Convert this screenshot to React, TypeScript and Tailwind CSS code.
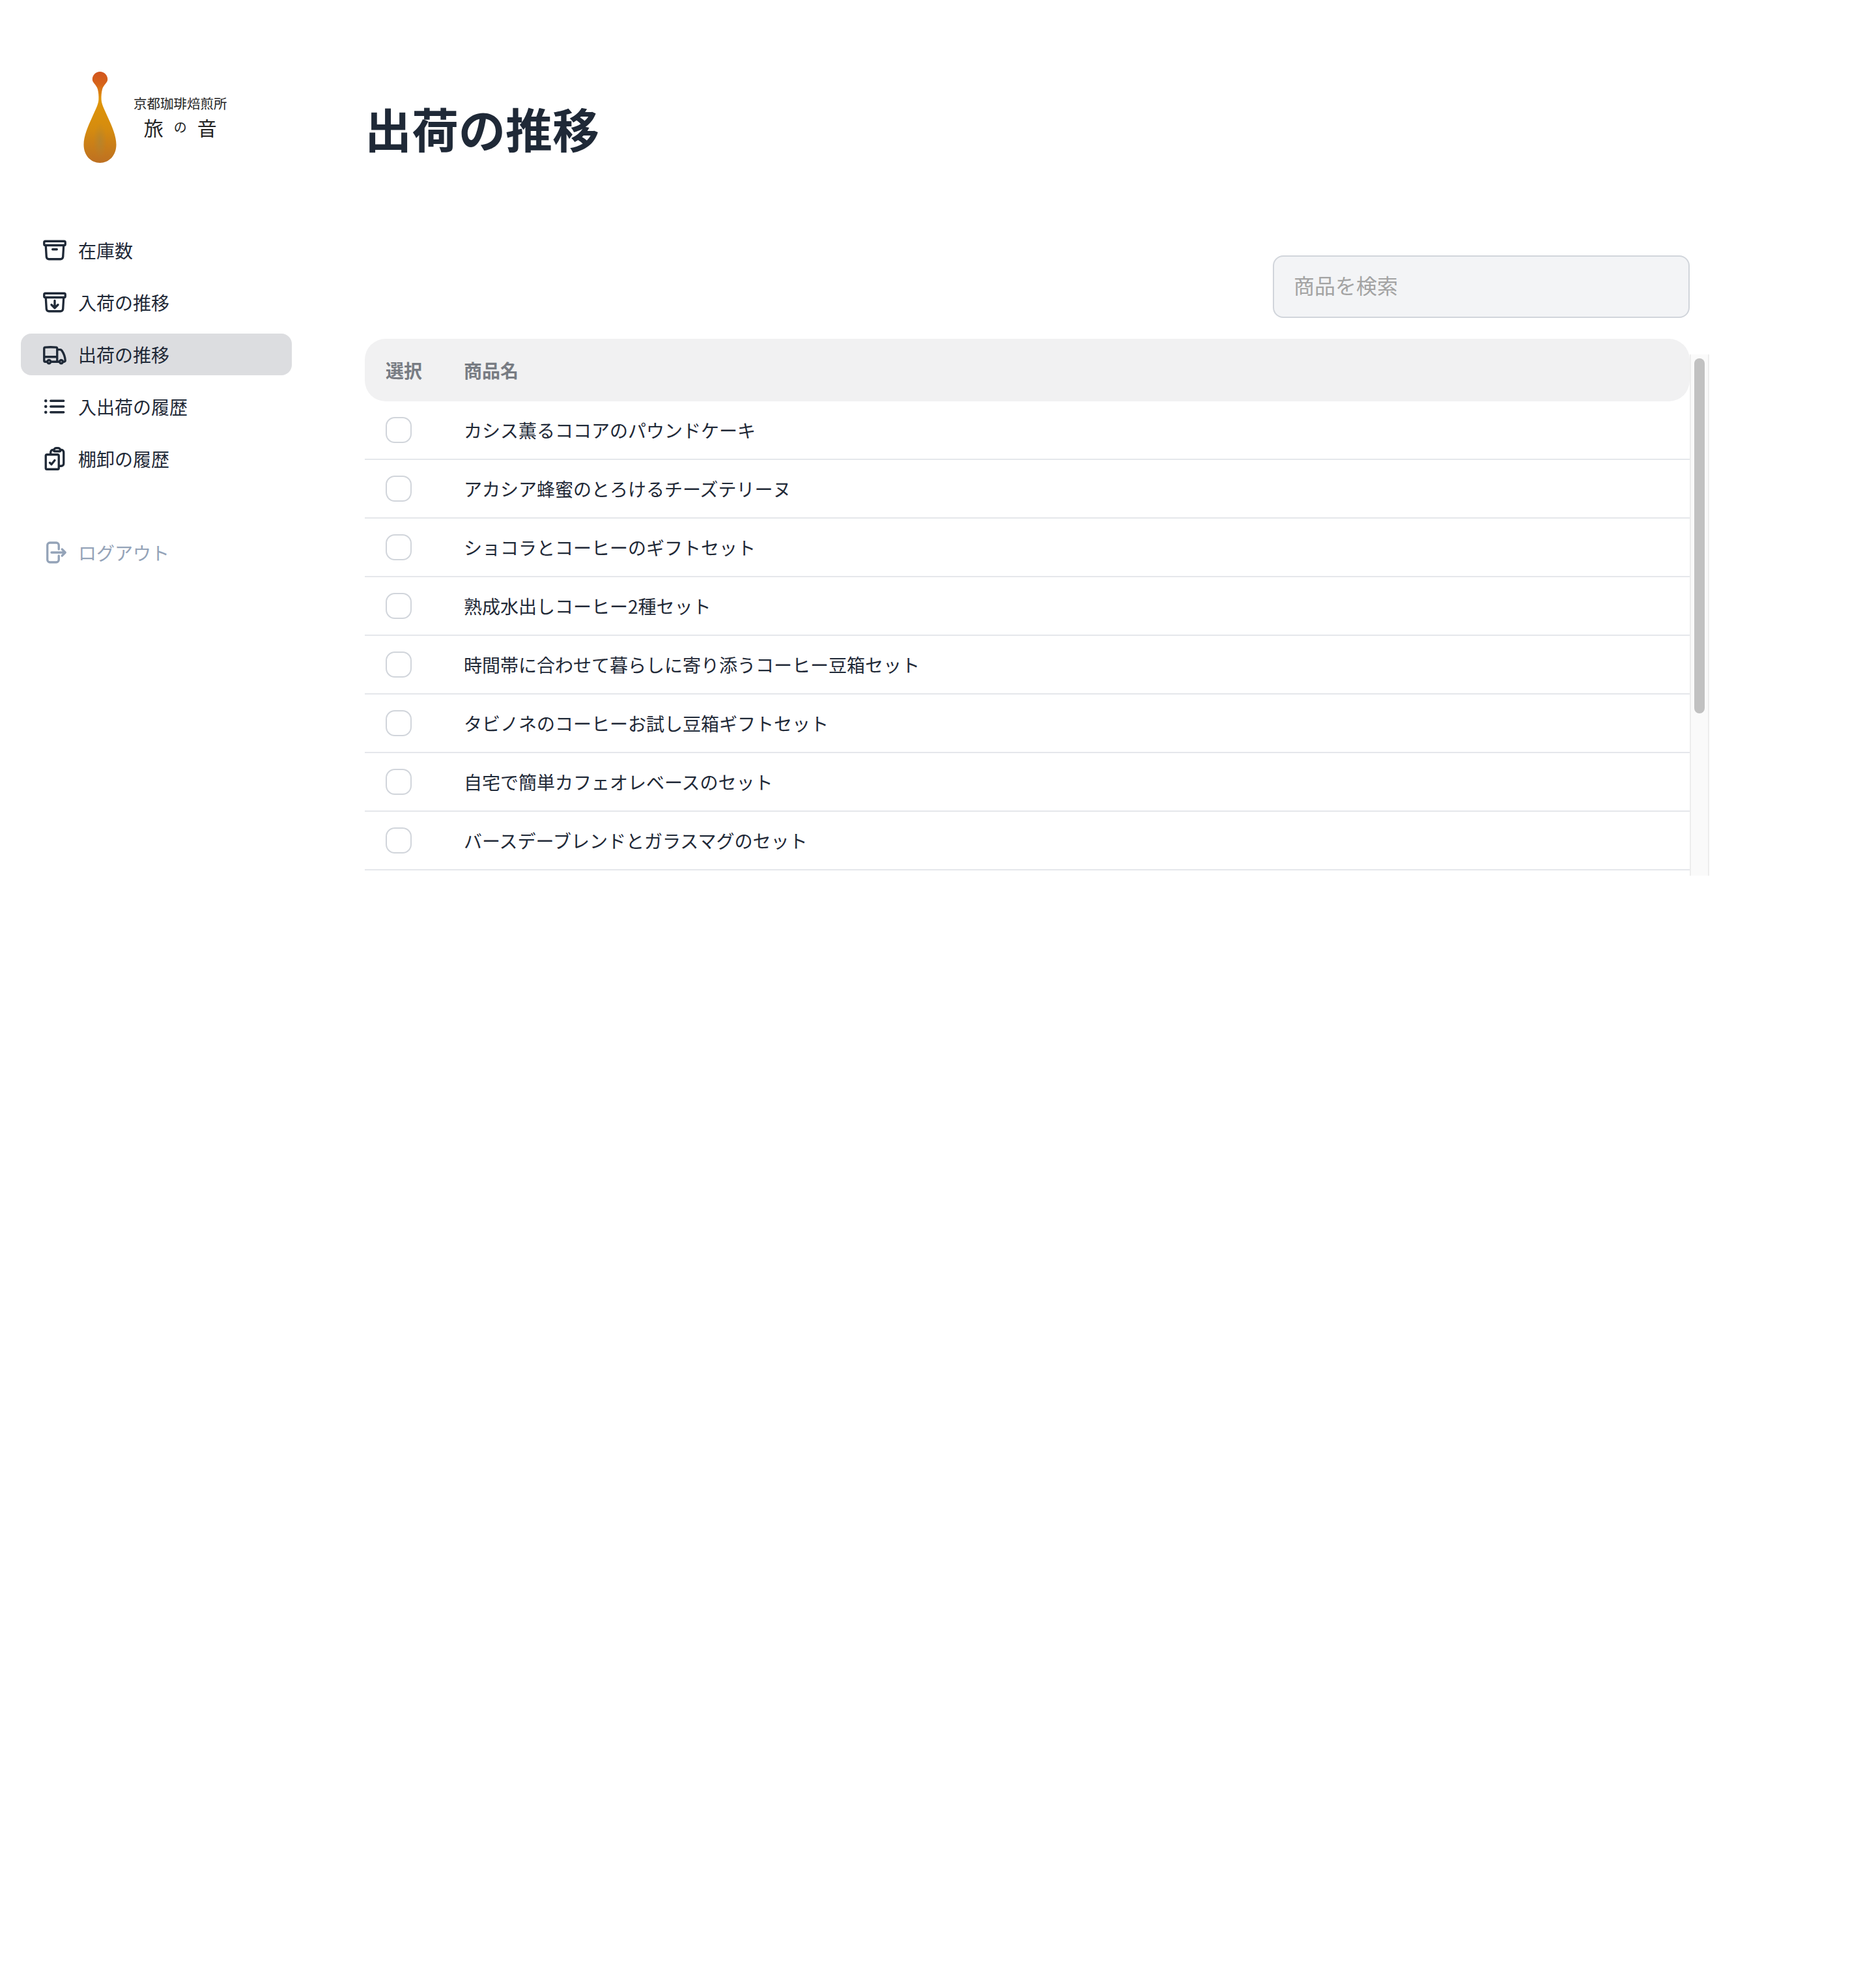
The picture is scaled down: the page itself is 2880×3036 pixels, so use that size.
import {
  HiOutlineArchiveBox,
  HiOutlineArchiveBoxArrowDown,
  HiOutlineTruck,
  HiOutlineListBullet,
  HiOutlineClipboardDocumentCheck,
  HiOutlineArrowRightOnRectangle,
} from "react-icons/hi2";

const navItems = [
  { label: "在庫数", Icon: HiOutlineArchiveBox },
  { label: "入荷の推移", Icon: HiOutlineArchiveBoxArrowDown },
  { label: "出荷の推移", Icon: HiOutlineTruck, active: true },
  { label: "入出荷の履歴", Icon: HiOutlineListBullet },
  { label: "棚卸の履歴", Icon: HiOutlineClipboardDocumentCheck },
];

const products = [
  "カシス薫るココアのパウンドケーキ",
  "アカシア蜂蜜のとろけるチーズテリーヌ",
  "ショコラとコーヒーのギフトセット",
  "熟成水出しコーヒー2種セット",
  "時間帯に合わせて暮らしに寄り添うコーヒー豆箱セット",
  "タビノネのコーヒーお試し豆箱ギフトセット",
  "自宅で簡単カフェオレベースのセット",
  "バースデーブレンドとガラスマグのセット",
];

function LogoDrop() {
  const d =
    "M25.5 1C32 1 37.2 6.2 37.2 12.7C37.2 18 31 21 29 28C27.8 33 27.3 38 27.6 44C28 52 33 60 38 72C44 85 50.5 100 50.5 113C50.5 130 39 141 25.5 141C12 141 .5 130 .5 113C.5 100 7 85 13 72C18 60 23 52 23.4 44C23.7 38 23.2 33 22 28C20 21 13.8 18 13.8 12.7C13.8 6.2 19 1 25.5 1Z";
  return (
    <svg width="51" height="142" viewBox="0 0 51 142" className="shrink-0">
      <defs>
        <linearGradient id="drop" x1="0" y1="0" x2="0" y2="1">
          <stop offset="0" stopColor="#d2551e" />
          <stop offset="0.14" stopColor="#d6641a" />
          <stop offset="0.3" stopColor="#e09508" />
          <stop offset="0.62" stopColor="#d58c0f" />
          <stop offset="1" stopColor="#bd7022" />
        </linearGradient>
        <radialGradient id="blotch" cx="0.5" cy="0.76" r="0.2">
          <stop offset="0" stopColor="#a8853a" stopOpacity="0.55" />
          <stop offset="1" stopColor="#a8853a" stopOpacity="0" />
        </radialGradient>
      </defs>
      <path d={d} fill="url(#drop)" />
      <path d={d} fill="url(#blotch)" />
    </svg>
  );
}

export default function App() {
  return (
    <div className="min-h-screen bg-white flex font-['Noto_Sans_CJK_JP','Noto_Sans',sans-serif] text-[#1f2937]">
      {/* Sidebar */}
      <aside className="w-[560px] shrink-0 pl-8 pr-[112px] pt-[109px]">
        <div className="flex gap-[26px] ml-24 h-[142px] mb-[101px] text-[#222]">
          <LogoDrop />
          <div className="flex flex-col items-center pt-[37px]">
            <div className="text-[20.5px] leading-[24px] whitespace-nowrap">京都珈琲焙煎所</div>
            <div className="flex items-center gap-4 mt-2 leading-[34px]">
              <span className="text-[30px]">旅</span>
              <span className="text-[20px]">の</span>
              <span className="text-[30px]">音</span>
            </div>
          </div>
        </div>

        <nav className="flex flex-col gap-4">
          {navItems.map(({ label, Icon, active }) => (
            <a
              key={label}
              className={`h-16 flex items-center gap-4 px-8 rounded-2xl text-[28px] ${active ? "bg-[#dcdde0]" : ""}`}
            >
              <Icon className="w-10 h-10 shrink-0" strokeWidth={2} />
              <span>{label}</span>
            </a>
          ))}
          <a className="h-16 mt-16 flex items-center gap-4 px-8 rounded-2xl text-[28px] text-[#94a3b8]">
            <HiOutlineArrowRightOnRectangle className="w-10 h-10 shrink-0" strokeWidth={2} />
            <span>ログアウト</span>
          </a>
        </nav>
      </aside>

      {/* Main */}
      <main className="w-[2064px] pt-[148px]">
        <h1 className="text-[72px] leading-[96px] font-bold">出荷の推移</h1>

        <div className="w-[2034px] flex justify-end mt-[148px]">
          <input
            placeholder="商品を検索"
            className="w-[640px] h-24 pl-[30px] pr-8 pb-[7px] rounded-2xl border-2 border-[#d1d5db] bg-[#f3f4f6] text-[32px] placeholder:text-[#a3a3a3] outline-none"
          />
        </div>

        <div className="mt-8 h-[824px] flex overflow-hidden">
          <div className="w-[2034px] shrink-0">
            <div className="h-24 flex items-center px-8 rounded-[32px] bg-[#f1f1f2] text-[28px] font-bold text-[#787c83]">
              <div className="w-[120px]">選択</div>
              <div>商品名</div>
            </div>
            {products.map((name) => (
              <div key={name} className="h-[90px] flex items-center px-8 border-b-2 border-[#e5e7eb] text-[28px]">
                <div className="w-[120px]">
                  <input
                    type="checkbox"
                    className="block appearance-none w-10 h-10 rounded-[14px] border-2 border-[#d1d5db] bg-white"
                  />
                </div>
                <div>{name}</div>
              </div>
            ))}
          </div>

          {/* Scrollbar */}
          <div className="w-[30px] h-[800px] mt-6 pt-1.5 border-x-2 border-[#ededed] bg-[#fafafa]">
            <div className="w-4 h-[545px] mx-auto rounded-full bg-[#c1c1c1]" />
          </div>
        </div>
      </main>
    </div>
  );
}
